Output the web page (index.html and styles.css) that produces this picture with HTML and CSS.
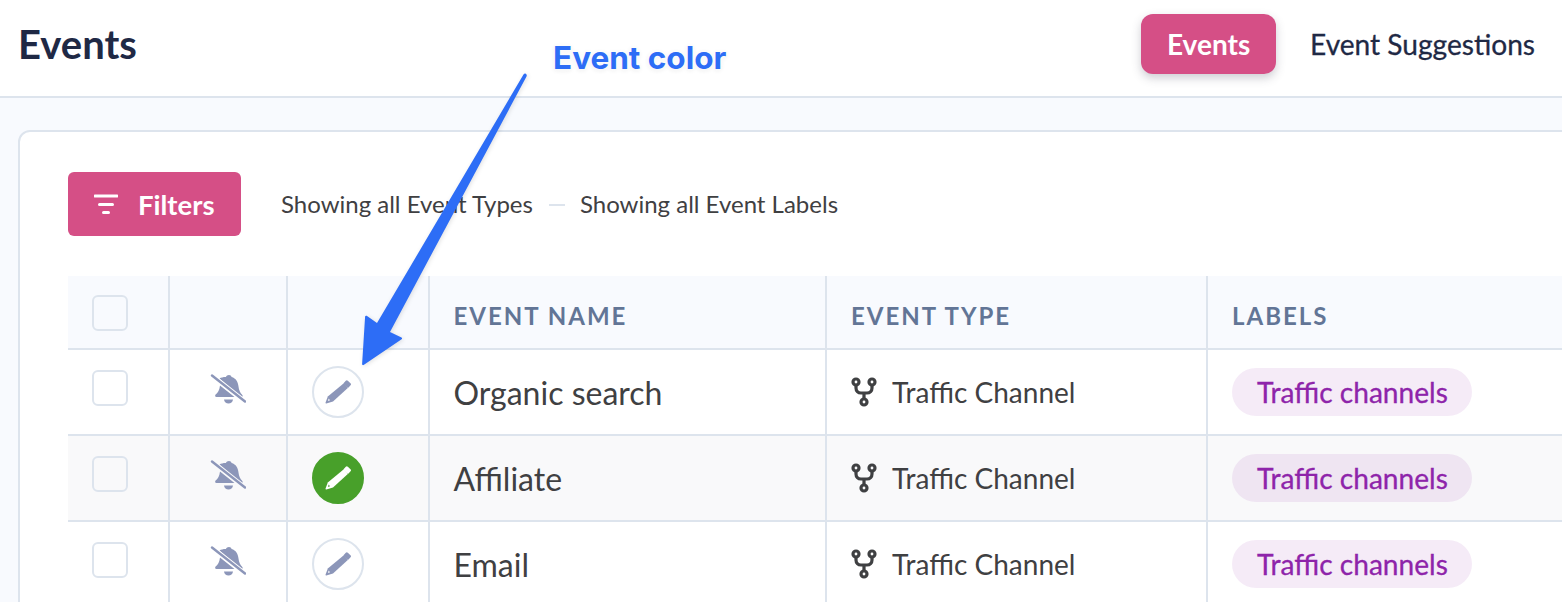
FILE: index.html
```html
<!DOCTYPE html>
<html lang="en">
<head>
<meta charset="utf-8">
<title>Events</title>
<link rel="stylesheet" href="styles.css">
</head>
<body>
<svg class="symbols" width="0" height="0" aria-hidden="true">
  <symbol id="bell" viewBox="0 0 36 30">
    <path d="M19 1c1.300 0 2.300.8 2.600 2 4.400 1.400 6.400 4.800 6.900 9.400.4 3.800 1.600 6.200 3.800 8.600.4.500.5 1 .3 1.500l-1.500 1L9.500 4.500C11 3.500 13 3 15.900 3 16.300 1.800 17.600 1 19 1z" fill="currentColor"/>
    <path d="M10 11.500 24.500 23H6.500c-1.400 0-1.800-1.500-.9-2.500C8 18.500 9.500 16 10 11.500z" fill="currentColor"/>
    <path d="M14 25.500h9c-.3 2.400-2.200 4-4.500 4s-4.200-1.600-4.500-4z" fill="currentColor"/>
    <path class="gap" d="M2 1.500 35 27.500"/>
    <path class="slash" d="M2 1.500 35 27.500"/>
  </symbol>
  <symbol id="pencil" viewBox="0 0 26 24">
    <path d="M18.500 3.500 22.800 8 8 21.500 1.300 23.500c-.6.100-.9-.3-.8-.8L2.800 16.500z" fill="currentColor"/>
    <rect x="19" y="1.200" width="6.500" height="5.500" rx="1.400" transform="rotate(43 22.200 4)" fill="currentColor"/>
    <path class="nib" d="M3.600 18.600 5 20.200 3 20.900z"/>
  </symbol>
  <symbol id="fork" viewBox="0 0 26 30">
    <circle cx="5" cy="5" r="3"/>
    <circle cx="21" cy="5" r="3"/>
    <circle cx="13" cy="25" r="3"/>
    <path d="M5 8v3c0 3 2 5 5 5h6c3 0 5-2 5-5V8M13 16v6"/>
  </symbol>
  <symbol id="funnel" viewBox="0 0 24 20">
    <path d="M1 2h22M5.500 10.500h13M9.500 18.500h5"/>
  </symbol>
</svg>

<header class="topbar">
  <h1 class="title">Events</h1>
  <nav class="tabs">
    <a class="tab tab-active">Events</a>
    <a class="tab">Event Suggestions</a>
  </nav>
</header>

<main class="content">
  <section class="card">
    <div class="toolbar">
      <button class="filter-btn" type="button">
        <svg class="funnel"><use href="#funnel"/></svg>
        <span>Filters</span>
      </button>
      <span class="filter-text">Showing all Event Types</span>
      <span class="dash"></span>
      <span class="filter-text">Showing all Event Labels</span>
    </div>

    <div class="table">
      <div class="row row-head">
        <div class="cell cell-center"><span class="check"></span></div>
        <div class="cell"></div>
        <div class="cell"></div>
        <div class="cell cell-text"><span class="head-label">EVENT NAME</span></div>
        <div class="cell cell-text cell-type"><span class="head-label">EVENT TYPE</span></div>
        <div class="cell cell-last"><span class="head-label">LABELS</span></div>
      </div>

      <div class="row">
        <div class="cell cell-center"><span class="check"></span></div>
        <div class="cell cell-center"><svg class="bell"><use href="#bell"/></svg></div>
        <div class="cell cell-color"><span class="color-dot"><svg class="pencil"><use href="#pencil"/></svg></span></div>
        <div class="cell cell-text name">Organic search</div>
        <div class="cell cell-text cell-type type"><svg class="fork"><use href="#fork"/></svg>Traffic Channel</div>
        <div class="cell cell-last"><span class="pill">Traffic channels</span></div>
      </div>

      <div class="row row-alt">
        <div class="cell cell-center"><span class="check"></span></div>
        <div class="cell cell-center"><svg class="bell"><use href="#bell"/></svg></div>
        <div class="cell cell-color"><span class="color-dot color-green"><svg class="pencil"><use href="#pencil"/></svg></span></div>
        <div class="cell cell-text name">Affiliate</div>
        <div class="cell cell-text cell-type type"><svg class="fork"><use href="#fork"/></svg>Traffic Channel</div>
        <div class="cell cell-last"><span class="pill">Traffic channels</span></div>
      </div>

      <div class="row">
        <div class="cell cell-center"><span class="check"></span></div>
        <div class="cell cell-center"><svg class="bell"><use href="#bell"/></svg></div>
        <div class="cell cell-color"><span class="color-dot"><svg class="pencil"><use href="#pencil"/></svg></span></div>
        <div class="cell cell-text name">Email</div>
        <div class="cell cell-text cell-type type"><svg class="fork"><use href="#fork"/></svg>Traffic Channel</div>
        <div class="cell cell-last"><span class="pill">Traffic channels</span></div>
      </div>
    </div>
  </section>
</main>

<div class="callout">Event color</div>
<svg class="arrow" viewBox="0 0 1562 602" aria-hidden="true">
  <path d="M523.500 74.500c.8-1.300 2.300-1.300 3 0 .4.700.3 1.400 0 2L390 332l11.500 5.500c.8.400.8 1.200.1 1.700l-38 25.800c-.7.400-1.500 0-1.500-.9l3-47.500c.1-.9.900-1.200 1.600-.8L377 323z"/>
</svg>
</body>
</html>
```
FILE: styles.css
```css
* { box-sizing: border-box; }

html, body {
  margin: 0;
  height: 602px;
  overflow: hidden;
}

body {
  position: relative;
  width: 1562px;
  background: #f8fafe;
  font-family: Lato, "Open Sans", sans-serif;
  color: #3f4042;
}

.symbols { position: absolute; }

.topbar {
  height: 98px;
  background: #fff;
  border-bottom: 2px solid #dde4ed;
  display: flex;
  align-items: flex-start;
  justify-content: space-between;
  padding: 14px 27px 0 18px;
}

.title {
  margin: 0;
  font-size: 40px;
  line-height: 60px;
  font-weight: 700;
  color: #1f2945;
}

.tabs { display: flex; align-items: center; gap: 34px; }

.tab {
  font-size: 28.100px;
  line-height: 60px;
  color: #1f2945;
  -webkit-text-stroke: .3px #1f2945;
}

.tab-active {
  width: 135px;
  height: 60px;
  border-radius: 12px;
  background: #d54f86;
  color: #fff;
  font-size: 28px;
  font-weight: 700;
  -webkit-text-stroke: 0;
  text-align: center;
  box-shadow: 0 4px 10px rgba(60, 60, 80, .25);
}

.content { padding: 32px 0 0 18px; }

.card {
  width: 1620px;
  height: 600px;
  background: #fff;
  border: 2px solid #dde4ed;
  border-radius: 12px;
  padding: 40px 48px 0;
}

.toolbar {
  height: 64px;
  display: flex;
  align-items: center;
  margin-bottom: 40px;
}

.filter-btn {
  width: 173px;
  height: 64px;
  border: 0;
  border-radius: 6px;
  background: #d54f86;
  color: #fff;
  font: 700 27.500px Lato, sans-serif;
  display: flex;
  align-items: center;
  padding: 0 0 0 26px;
  gap: 20px;
  margin-right: 40px;
}

.funnel {
  width: 24px;
  height: 20px;
  fill: none;
  stroke: #fff;
  stroke-width: 3px;
  stroke-linecap: round;
}

.filter-text { font-size: 24px; color: #3f4042; margin-bottom: 2px; }

.dash {
  width: 16px;
  height: 2px;
  margin: 2px 15px 0 16px;
  background: #dde4ed;
}

.row {
  display: grid;
  grid-template-columns: 102px 118px 142px 397px 381px 1fr;
  height: 86px;
  border-bottom: 2px solid #dde4ed;
  background: #fff;
  --row: #fff;
}

.row-head {
  height: 74px;
  background: #f8fafe;
  --row: #f8fafe;
  font-size: 24px;
  font-weight: 700;
  letter-spacing: 2px;
  color: #627596;
}

.head-label { margin-top: 6px; }

.row-alt { background: #f9f9fa; --row: #f9f9fa; }

.cell {
  display: flex;
  align-items: center;
  border-right: 2px solid #dde4ed;
}

.cell-center { justify-content: center; }
.cell-text { padding-left: 23.500px; }
.cell-type { padding-left: 24px; }
.cell-last { padding-left: 24px; border-right: 0; }
.cell-color { padding-left: 24px; }

.check {
  display: block;
  width: 36px;
  height: 36px;
  margin: 0 16px 8px 0;
  border: 2px solid #dde4ed;
  border-radius: 6px;
}

.row-head .check { margin: 2px 16px 0 0; }

.bell {
  width: 36px;
  height: 30px;
  margin: 0 1px 6px 0;
  color: #8c96b9;
}

.gap { fill: none; stroke: var(--row); stroke-width: 4.500px; }
.slash { fill: none; stroke: currentColor; stroke-width: 2.400px; stroke-linecap: round; }

.color-dot {
  width: 52px;
  height: 52px;
  border-radius: 50%;
  border: 2px solid #dde4ed;
  display: flex;
  align-items: center;
  justify-content: center;
  color: #8c96b9;
  --nib: #fff;
}

.color-green {
  background: #48a02a;
  border-color: #48a02a;
  color: #fff;
  --nib: #48a02a;
}

.pencil { width: 26px; height: 24px; }
.nib { fill: var(--nib); }

.name { font-size: 32px; }

.type { font-size: 28px; gap: 15px; }

.fork {
  width: 26px;
  height: 30px;
  fill: none;
  stroke: #3f4042;
  stroke-width: 3.200px;
}

.pill {
  height: 48px;
  padding: 0 24px 0 25px;
  border-radius: 24px;
  background: rgba(142, 36, 170, .09);
  color: #8e24aa;
  font-size: 28.100px;
  line-height: 48px;
  -webkit-text-stroke: .3px #8e24aa;
}

.callout {
  position: absolute;
  left: 553px;
  top: 37px;
  font: 700 31.500px Inter, "Liberation Sans", sans-serif;
  line-height: 41px;
  color: #2d6df6;
  text-shadow: 0 0 4px #fff, 0 0 8px rgba(255, 255, 255, .9), 0 1px 5px rgba(0, 0, 0, .12);
}

.arrow {
  position: absolute;
  left: 0;
  top: 0;
  width: 1562px;
  height: 602px;
  fill: #2d6df6;
  filter: drop-shadow(1px 1px 2px rgba(0, 0, 0, .12));
}
```
